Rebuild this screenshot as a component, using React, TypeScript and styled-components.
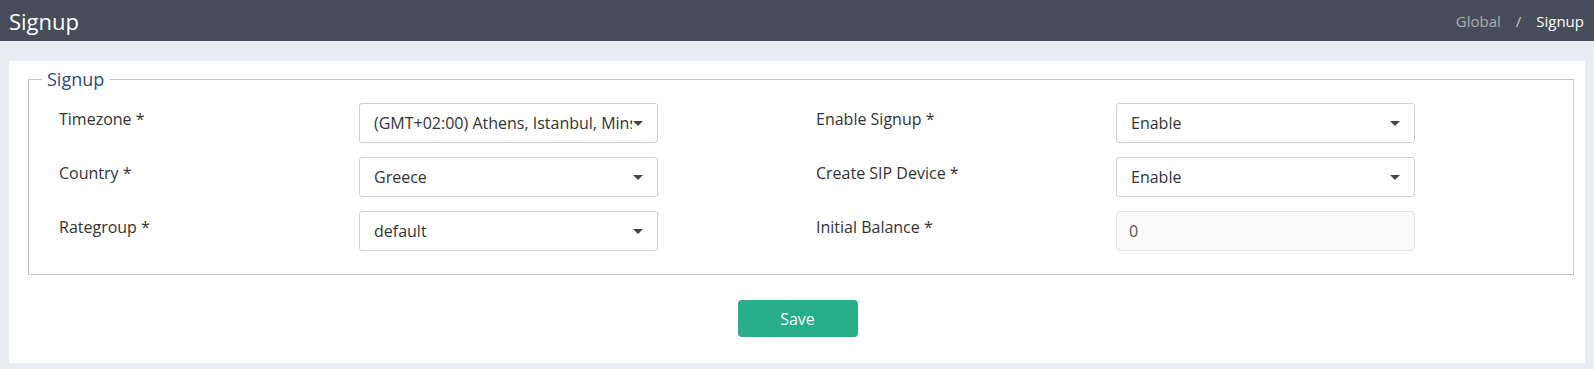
import React from "react";
import styled, { createGlobalStyle } from "styled-components";

const GlobalStyle = createGlobalStyle`
  html, body {
    margin: 0;
    padding: 0;
    background: #e9ecf0;
    font-family: "Open Sans", "Noto Sans", "Liberation Sans", sans-serif;
    color: #333;
  }
  * { box-sizing: border-box; }
`;

const Header = styled.header`
  height: 41px;
  background: #464d58;
  display: flex;
  align-items: center;
  justify-content: space-between;
  padding: 0 10px 0 9px;
`;

const Title = styled.h1`
  margin: 0;
  font-size: 22px;
  font-weight: 400;
  color: #fff;
`;

const Crumbs = styled.nav`
  display: flex;
  align-items: center;
  gap: 10px;
  font-size: 15px;
`;

const Crumb = styled.span<{ $active?: boolean }>`
  color: ${(p) => (p.$active ? "#ffffff" : "#a9afb7")};
`;

const Sep = styled.span`
  color: #c9cdd2;
  padding: 0 5px;
`;

const Main = styled.main`
  padding: 20px 9px 6px;
`;

const Card = styled.section`
  background: #fff;
  padding: 6px 18px 26px 19px;
`;

const Fieldset = styled.fieldset`
  margin: 0;
  border: 1px solid #c4c4c4;
  padding: 12px 0 23px 0;
`;

const Legend = styled.legend`
  margin-left: 13px;
  padding: 0 5px;
  font-size: 18px;
  line-height: 24px;
  color: #2f4a7c;
`;

const FormGrid = styled.div`
  display: grid;
  grid-template-columns: repeat(2, 757px);
  row-gap: 14px;
  padding-left: 30px;
`;

const Field = styled.div`
  display: grid;
  grid-template-columns: 300px 299px;
  align-items: start;
`;

const Label = styled.label`
  font-size: 16px;
  line-height: 22px;
  padding-top: 5px;
  color: #333;
`;

const SelectBox = styled.div`
  height: 40px;
  border: 1px solid #cfcfcf;
  border-radius: 3px;
  background: #fff;
  display: flex;
  align-items: center;
  padding: 0 14px 0 14px;
  gap: 1px;
  font-size: 16px;
  color: #333;
`;

const SelectText = styled.span`
  flex: 1;
  white-space: nowrap;
  overflow: hidden;
`;

const Caret = styled.span`
  width: 0;
  height: 0;
  border-left: 5px solid transparent;
  border-right: 5px solid transparent;
  border-top: 5px solid #444;
  flex: none;
`;

const Input = styled.div`
  height: 40px;
  border: 1px solid #e3e3e3;
  border-radius: 4px;
  background: #fafafa;
  display: flex;
  align-items: center;
  padding: 0 12px;
  font-size: 16px;
  color: #555;
`;

const Actions = styled.div`
  display: flex;
  justify-content: center;
  padding-top: 25px;
`;

const SaveButton = styled.button`
  width: 120px;
  height: 37px;
  border: none;
  border-radius: 4px;
  background: #27ae88;
  color: #fff;
  font-family: inherit;
  font-size: 16px;
`;

const Select = ({ value }: { value: string }) => (
  <SelectBox>
    <SelectText>{value}</SelectText>
    <Caret />
  </SelectBox>
);

export default function App() {
  return (
    <>
      <GlobalStyle />
      <Header>
        <Title>Signup</Title>
        <Crumbs>
          <Crumb>Global</Crumb>
          <Sep>/</Sep>
          <Crumb $active>Signup</Crumb>
        </Crumbs>
      </Header>
      <Main>
        <Card>
          <Fieldset>
            <Legend>Signup</Legend>
            <FormGrid>
              <Field>
                <Label>Timezone *</Label>
                <Select value="(GMT+02:00) Athens, Istanbul, Minsk" />
              </Field>
              <Field>
                <Label>Enable Signup *</Label>
                <Select value="Enable" />
              </Field>
              <Field>
                <Label>Country *</Label>
                <Select value="Greece" />
              </Field>
              <Field>
                <Label>Create SIP Device *</Label>
                <Select value="Enable" />
              </Field>
              <Field>
                <Label>Rategroup *</Label>
                <Select value="default" />
              </Field>
              <Field>
                <Label>Initial Balance *</Label>
                <Input>0</Input>
              </Field>
            </FormGrid>
          </Fieldset>
          <Actions>
            <SaveButton>Save</SaveButton>
          </Actions>
        </Card>
      </Main>
    </>
  );
}
